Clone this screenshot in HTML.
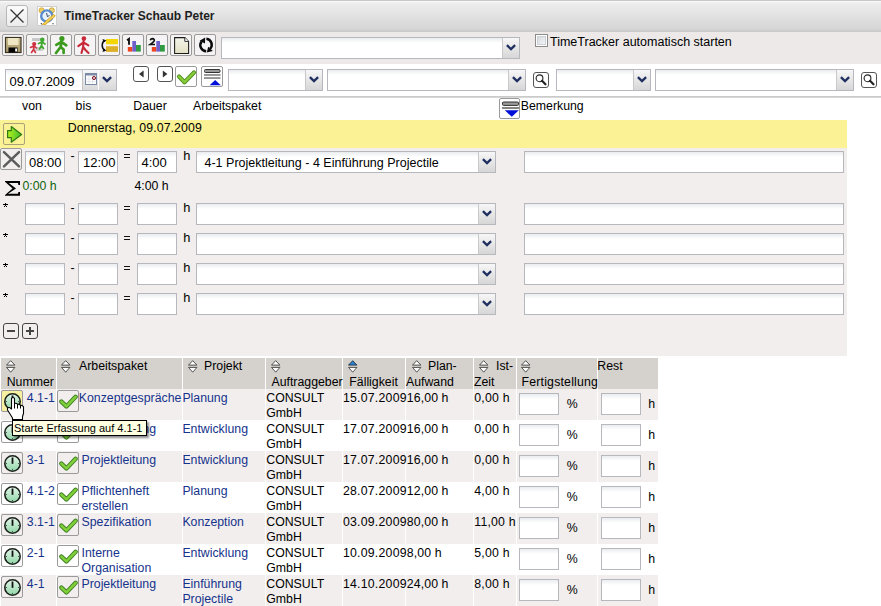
<!DOCTYPE html><html><head><meta charset="utf-8"><style>
*{margin:0;padding:0;box-sizing:content-box}
html,body{width:881px;height:606px;overflow:hidden;background:#fff;font-family:"Liberation Sans", sans-serif;font-size:12.3px;color:#000}
.t{position:absolute;white-space:nowrap;line-height:15px}
.inp{position:absolute;border:1px solid #b6b8be;background:linear-gradient(#e9ecef,#fff 5px,#fff)}
.cb .dd{position:absolute;right:0;top:0;width:16px;border-left:1px solid #c9c9c9;background:linear-gradient(#f7f7f7,#d6d6d6)}
.btn{position:absolute;border:1px solid #9a9a9a;border-radius:2px;background:transparent}
.ybtn{background:transparent;border-color:#a9a17a}
.rbtn.obtn{border-radius:3px;border-color:#444;background:transparent}
.rbtn{position:absolute;border:1px solid #555;border-radius:3px;background:#fff}
svg{display:block}
</style></head><body><div style="position:absolute;left:0px;top:0px;width:881px;height:32px;background:linear-gradient(#c8c8c8 0,#c8c8c8 1px,#fbfbfb 1px,#ededed 3px,#d6d6d6 29px,#cbcbcb 31px,#c8c8c8 32px)"></div>
<div style="position:absolute;left:6px;top:5px;width:20px;height:20px;border:1px solid #b8b8b8;border-radius:3px;background:linear-gradient(#fbfbfb,#ececec)"><svg width="20" height="20"><path d="M3.5 3.5 L16.5 16.5 M16.5 3.5 L3.5 16.5" stroke="#333" stroke-width="1.3"/></svg></div>
<div style="position:absolute;left:37px;top:6px;width:18px;height:18px;border:1px solid #cfcfcf;background:#fff"><svg width="18" height="18" viewBox="0 0 18 18">
<circle cx="3.6" cy="3.4" r="2.6" fill="#f2d060" stroke="#d0a030" stroke-width="0.8"/>
<circle cx="13.8" cy="3.4" r="2.6" fill="#e8d070" stroke="#c8a030" stroke-width="0.8"/>
<circle cx="8.8" cy="9" r="5.6" fill="#e8f2ff" stroke="#5a8ccc" stroke-width="2.4"/>
<path d="M8.6 6 L9.4 9.6 L11.5 8.5" fill="none" stroke="#2a3a50" stroke-width="0.9"/>
<path d="M4 16.5 L2.8 17 M14.5 16.5 L15.5 17" stroke="#333" stroke-width="1.2"/>
<path d="M5.2 16.6 L15.6 7.2 L17.4 9 L7 18 L4.4 18 Z" fill="#f3cf55" stroke="#c89a28" stroke-width="0.8"/>
</svg></div>
<div class="t" style="left:64px;top:9px;font-weight:bold;font-size:12px;color:#1e1e1e">TimeTracker Schaub Peter</div>
<div style="position:absolute;left:0px;top:32px;width:881px;height:32px;background:#ece9e8"></div>
<div class="btn" style="left:2px;top:34px;width:20px;height:20px;background:#f5f3f3"><svg width="22" height="22" viewBox="0 0 22 22" style="position:absolute;left:-1px;top:-1px"><defs><linearGradient id="fl" x1="0" y1="0" x2="0" y2="1"><stop offset="0" stop-color="#cdbf92"/><stop offset="1" stop-color="#a8986a"/></linearGradient></defs><rect x="3.5" y="3.5" width="15.5" height="15" fill="url(#fl)" stroke="#3b3323" stroke-width="1.2"/><rect x="6" y="4" width="10.5" height="7" fill="#efe6c4"/><rect x="6.5" y="13.5" width="9" height="5" fill="#050505"/><rect x="13.2" y="14.5" width="1.8" height="3" fill="#fff"/></svg></div>
<div class="btn" style="left:26px;top:34px;width:20px;height:20px;background:#f5f3f3"><svg width="22" height="22" viewBox="0 0 22 22" style="position:absolute;left:-1px;top:-1px"><rect x="6" y="4" width="10" height="3" fill="#c8c8c8"/><rect x="8" y="13" width="9" height="4" fill="#d0d0d0"/><g stroke="#d03040" stroke-width="1.6" fill="none" stroke-linecap="round"><circle cx="8.2" cy="10" r="1.3" fill="#d03040"/><path d="M8 11.5 L7.5 15.5 M4.5 13.5 L8 12 L10.5 14 M7.5 15.5 L5.5 18.5 M7.5 15.5 L9.5 18.5"/></g><g stroke="#40a830" stroke-width="1.7" fill="none" stroke-linecap="round"><circle cx="16.3" cy="5.8" r="1.4" fill="#40a830"/><path d="M16 7.5 L15.5 11.5 M12.5 9.5 L16 8 L19 10 M15.5 11.5 L13.5 15 M15.5 11.5 L17.5 14.5"/></g></svg></div>
<div class="btn" style="left:50px;top:34px;width:20px;height:20px;background:#f5f3f3"><svg width="22" height="22" viewBox="0 0 22 22" style="position:absolute;left:-1px;top:-1px"><g stroke="#3c9a1e" stroke-width="2.7" fill="none" stroke-linecap="round" stroke-linejoin="round"><path d="M11.6 7 L10.6 13 M6.3 10.8 L11.4 7.8 L16.3 11.3 M10.6 13 L6 19 M10.6 13 L13.6 15.6 L13.6 19"/></g><circle cx="11.9" cy="4.6" r="2.6" fill="#3c9a1e"/></svg></div>
<div class="btn" style="left:74px;top:34px;width:20px;height:20px;background:#f5f3f3"><svg width="22" height="22" viewBox="0 0 22 22" style="position:absolute;left:-1px;top:-1px"><g stroke="#c82838" stroke-width="2.1" fill="none" stroke-linecap="round" stroke-linejoin="round"><path d="M9.6 6.8 L9.1 13 M4.3 12.2 L9.5 8.3 L14.4 11.3 M9.1 13 L7.5 19 M9.1 13 L11.5 16 L14.5 19"/></g><circle cx="9.9" cy="4.6" r="2.3" fill="#c82838"/></svg></div>
<div class="btn" style="left:98px;top:34px;width:20px;height:20px;background:#f5f3f3"><svg width="22" height="22" viewBox="0 0 22 22" style="position:absolute;left:-1px;top:-1px"><rect x="8" y="5" width="12" height="5.3" fill="#f4d700"/><rect x="8" y="12.2" width="12" height="5.7" fill="#dcb028"/><path d="M7 6.5 Q4.2 7.5 4.2 11.2 Q4.2 15 7 16.5" fill="none" stroke="#111" stroke-width="1.5"/><path d="M4.5 5 L8.5 6.5 L5.5 8.5 Z M4.5 18 L8.5 16.5 L5.5 14.5 Z" fill="#111"/></svg></div>
<div class="btn" style="left:122px;top:34px;width:20px;height:20px;background:#f5f3f3"><svg width="22" height="22" viewBox="0 0 22 22" style="position:absolute;left:-1px;top:-1px"><path d="M5 6.2 L7 4.8 V10.8" fill="none" stroke="#111" stroke-width="1.9"/><rect x="5.8" y="13" width="4.5" height="4.6" fill="#ee4422"/><rect x="10.3" y="7" width="3.7" height="10.6" fill="#6f5fcc"/><rect x="14" y="11" width="4.8" height="6.6" fill="#2f9a40"/></svg></div>
<div class="btn" style="left:146px;top:34px;width:20px;height:20px;background:#f5f3f3"><svg width="22" height="22" viewBox="0 0 22 22" style="position:absolute;left:-1px;top:-1px"><path d="M4.3 6.2 Q4.8 4.6 6.5 4.6 Q8.6 4.8 8.2 6.8 Q7.8 8 4.2 10.5 H9" fill="none" stroke="#111" stroke-width="1.7"/><rect x="5.8" y="13" width="4.5" height="4.6" fill="#ee4422"/><rect x="10.3" y="7" width="3.7" height="10.6" fill="#6f5fcc"/><rect x="14" y="11" width="4.8" height="6.6" fill="#2f9a40"/></svg></div>
<div class="btn" style="left:170px;top:34px;width:20px;height:20px;background:#f5f3f3"><svg width="22" height="22" viewBox="0 0 22 22" style="position:absolute;left:-1px;top:-1px"><defs><linearGradient id="dg" x1="0" y1="0" x2="0" y2="1"><stop offset="0" stop-color="#f4f4ea"/><stop offset="1" stop-color="#e2e0c4"/></linearGradient></defs><path d="M4.6 3.6 H14.8 L18.6 7.4 V19.4 H4.6 Z" fill="url(#dg)" stroke="#1a1a1a" stroke-width="1.05"/><path d="M14.8 3.6 V7.4 H18.6" fill="#fff" stroke="#1a1a1a" stroke-width="0.9"/></svg></div>
<div class="btn" style="left:194px;top:34px;width:20px;height:20px;background:#f5f3f3"><svg width="22" height="22" viewBox="0 0 22 22" style="position:absolute;left:-1px;top:-1px"><g fill="none" stroke="#0a0a0a" stroke-width="2.5"><path d="M7.6 7.4 A6.1 6.1 0 0 0 12.2 17.2"/><path d="M12.4 4.7 A6.1 6.1 0 0 1 16 15"/></g><path d="M5.6 6.8 L11.2 3.6 L11 9.4 Z" fill="#0a0a0a"/><path d="M18.8 17 L12.8 18.6 L14.2 12.8 Z" fill="#0a0a0a"/></svg></div>
<div class="inp cb" style="left:221px;top:37px;width:297px;height:20px"><div class="dd" style="height:20px"><svg width="10" height="7" viewBox="0 0 10 7" style="position:absolute;left:3px;top:6px"><path d="M0.9 1.2 L5 5.1 L9.1 1.2" fill="none" stroke="#1f2f60" stroke-width="2.3"/></svg></div></div>
<div style="position:absolute;left:535px;top:34px;width:11px;height:11px;border:1px solid #8c8c8c;background:#fff"><div style="position:absolute;left:1px;top:1px;width:7px;height:7px;border:1px solid #cdd0d4;background:linear-gradient(135deg,#d6dade,#f4f6f8)"></div></div>
<div class="t" style="left:550px;top:35px;font-size:12.5px">TimeTracker automatisch starten</div>
<div class="inp" style="left:5px;top:69px;width:110px;height:20px"><div style="position:absolute;left:76px;top:0;width:16px;height:20px;border-left:1px solid #c4c4c4;background:linear-gradient(#f4f6f8,#dadada)"><svg width="12" height="12" viewBox="0 0 12 12" style="position:absolute;left:2px;top:3px"><rect x="0.5" y="0.5" width="11" height="11" fill="#fff" stroke="#7b8ba3" stroke-width="1"/><rect x="0.5" y="0.5" width="11" height="2" fill="#7b8ba3"/><path d="M4 3 V11 M7.5 3 V11 M1 6 H11 M1 8.6 H11" stroke="#dde2ea" stroke-width="0.8"/><circle cx="9" cy="5" r="1.5" fill="none" stroke="#7a0010" stroke-width="1"/></svg></div><div class="dd" style="position:absolute;right:0;top:0;width:17px;height:20px;border-left:1px solid #fff;background:linear-gradient(#f3f3f3,#d8d8d8)"><svg width="10" height="7" viewBox="0 0 10 7" style="position:absolute;left:3px;top:6px"><path d="M0.9 1.2 L5 5.1 L9.1 1.2" fill="none" stroke="#1f2f60" stroke-width="2.3"/></svg></div></div>
<div class="t" style="left:9.5px;top:74px;font-size:13px">09.07.2009</div>
<div class="rbtn" style="left:133px;top:66px;width:14px;height:14px"><svg width="16" height="16" viewBox="0 0 16 16" style="position:absolute;left:-1px;top:-1px"><path d="M10.6 4.4 V11.4 L6 7.9 Z" fill="#333"/></svg></div>
<div class="rbtn" style="left:157px;top:66px;width:14px;height:14px"><svg width="16" height="16" viewBox="0 0 16 16" style="position:absolute;left:-1px;top:-1px"><path d="M5.8 4.4 V11.4 L10.4 7.9 Z" fill="#333"/></svg></div>
<div class="btn" style="left:175px;top:66px;width:20px;height:19px"><svg width="22" height="21" viewBox="0 0 22 21" style="position:absolute;left:-1px;top:-1px"><path d="M4 10.5 L9.5 16.2 L19 6.5" fill="none" stroke="#4f8f1f" stroke-width="4.2" stroke-linecap="round" stroke-linejoin="round"/><path d="M4 10.5 L9.5 16.2 L19 6.5" fill="none" stroke="#88cc3c" stroke-width="2.4" stroke-linecap="round" stroke-linejoin="round"/></svg></div>
<div class="btn" style="left:201px;top:66px;width:20px;height:19px"><svg width="22" height="21" viewBox="0 0 22 21" style="position:absolute;left:-1px;top:-1px"><rect x="3.5" y="3.5" width="15.5" height="3" rx="1" fill="#9a9a9a" stroke="#333" stroke-width="1"/><rect x="3" y="8.2" width="16.5" height="1.5" fill="#777"/><rect x="3" y="11.3" width="16.5" height="1.5" fill="#777"/><path d="M8.6 19.2 L14.2 14 L19.8 19.2 Z" fill="#0010d8"/></svg></div>
<div class="inp cb" style="left:228px;top:69px;width:93px;height:20px"><div class="dd" style="height:20px"><svg width="10" height="7" viewBox="0 0 10 7" style="position:absolute;left:3px;top:6px"><path d="M0.9 1.2 L5 5.1 L9.1 1.2" fill="none" stroke="#1f2f60" stroke-width="2.3"/></svg></div></div>
<div class="inp cb" style="left:327px;top:69px;width:197px;height:20px"><div class="dd" style="height:20px"><svg width="10" height="7" viewBox="0 0 10 7" style="position:absolute;left:3px;top:6px"><path d="M0.9 1.2 L5 5.1 L9.1 1.2" fill="none" stroke="#1f2f60" stroke-width="2.3"/></svg></div></div>
<div class="rbtn" style="left:533px;top:72px;width:14px;height:14px"><svg width="16" height="16" viewBox="0 0 16 16" style="position:absolute;left:-1px;top:-1px"><circle cx="6.5" cy="6.3" r="3.4" fill="#fff" stroke="#222" stroke-width="1.1"/><path d="M9 8.8 L12.5 12.3" stroke="#222" stroke-width="2.2" stroke-linecap="round"/></svg></div>
<div class="inp cb" style="left:556px;top:69px;width:93px;height:20px"><div class="dd" style="height:20px"><svg width="10" height="7" viewBox="0 0 10 7" style="position:absolute;left:3px;top:6px"><path d="M0.9 1.2 L5 5.1 L9.1 1.2" fill="none" stroke="#1f2f60" stroke-width="2.3"/></svg></div></div>
<div class="inp cb" style="left:655px;top:69px;width:197px;height:20px"><div class="dd" style="height:20px"><svg width="10" height="7" viewBox="0 0 10 7" style="position:absolute;left:3px;top:6px"><path d="M0.9 1.2 L5 5.1 L9.1 1.2" fill="none" stroke="#1f2f60" stroke-width="2.3"/></svg></div></div>
<div class="rbtn" style="left:861px;top:72px;width:14px;height:14px"><svg width="16" height="16" viewBox="0 0 16 16" style="position:absolute;left:-1px;top:-1px"><circle cx="6.5" cy="6.3" r="3.4" fill="#fff" stroke="#222" stroke-width="1.1"/><path d="M9 8.8 L12.5 12.3" stroke="#222" stroke-width="2.2" stroke-linecap="round"/></svg></div>
<div style="position:absolute;left:0px;top:96px;width:881px;height:2px;background:linear-gradient(#c4c4c4,#dedede)"></div>
<div class="t" style="left:22px;top:99px;">von</div>
<div class="t" style="left:75.6px;top:99px;">bis</div>
<div class="t" style="left:133.3px;top:99px;">Dauer</div>
<div class="t" style="left:193px;top:99px;">Arbeitspaket</div>
<div class="btn" style="left:499px;top:98px;width:19px;height:19px"><svg width="21" height="21" viewBox="0 0 21 21" style="position:absolute;left:-1px;top:-1px"><rect x="3.5" y="4" width="16" height="3.4" rx="1" fill="#999" stroke="#333" stroke-width="1"/><rect x="3" y="9.2" width="17" height="1.6" fill="#666"/><path d="M5.8 12.3 H19.8 L12.8 18.8 Z" fill="#0010d8"/></svg></div>
<div class="t" style="left:520.8px;top:99px;">Bemerkung</div>
<div style="position:absolute;left:0px;top:120px;width:847px;height:28px;background:#faf295"></div>
<div class="btn ybtn" style="left:3px;top:123px;width:20px;height:20px"><svg width="22" height="22" viewBox="0 0 22 22" style="position:absolute;left:-1px;top:-1px"><defs><linearGradient id="ag" x1="0" y1="0" x2="1" y2="0"><stop offset="0" stop-color="#b4f01c"/><stop offset="1" stop-color="#3cbc30"/></linearGradient></defs><path d="M4.6 7.6 H8.3 V3.6 L18.6 11.4 L8.3 19.2 V14.7 H4.6 Z" fill="url(#ag)" stroke="#2d7a14" stroke-width="1.2" stroke-linejoin="round"/></svg></div>
<div class="t" style="left:67.7px;top:121px;letter-spacing:0.1px">Donnerstag, 09.07.2009</div>
<div style="position:absolute;left:0px;top:148px;width:847px;height:208px;background:#f2eeed"></div>
<div class="btn" style="left:0px;top:148px;width:20px;height:20px"><svg width="22" height="22" viewBox="0 0 22 22" style="position:absolute;left:-1px;top:-1px"><path d="M4 4.1 L19 18.4 M19 4.1 L4 18.4" stroke="#5c5c5c" stroke-width="2.5" stroke-linecap="round"/></svg></div>
<div class="inp" style="left:25px;top:151px;width:38px;height:20px"><span style="position:absolute;left:3px;top:3px;font-size:13px;line-height:15px">08:00</span></div>
<div class="t" style="left:70.5px;top:149px;">-</div>
<div class="inp" style="left:78px;top:151px;width:38px;height:20px"><span style="position:absolute;left:4px;top:3px;font-size:13px;line-height:15px">12:00</span></div>
<div style="position:absolute;left:124px;top:154px;width:6px;height:1.3px;background:#111"></div><div style="position:absolute;left:124px;top:157px;width:6px;height:1.3px;background:#111"></div>
<div class="inp" style="left:137px;top:151px;width:38px;height:20px"><span style="position:absolute;left:3.5px;top:3px;font-size:13px;line-height:15px">4:00</span></div>
<div class="t" style="left:183.3px;top:147.5px;font-size:12.8px">h</div>
<div class="inp cb" style="left:196px;top:151px;width:298px;height:20px"><span style="position:absolute;left:7.5px;top:3.5px;white-space:nowrap;font-size:12.5px;line-height:15px">4-1 Projektleitung - 4 Einführung Projectile</span><div class="dd" style="height:20px"><svg width="10" height="7" viewBox="0 0 10 7" style="position:absolute;left:3px;top:6px"><path d="M0.9 1.2 L5 5.1 L9.1 1.2" fill="none" stroke="#1f2f60" stroke-width="2.3"/></svg></div></div>
<div class="inp" style="left:524px;top:151px;width:318px;height:20px"></div>
<div class="t" style="left:22.5px;top:179px;color:#10640f">0:00 h</div>
<div class="t" style="left:134.5px;top:179px;">4:00 h</div>
<div style="position:absolute;left:5px;top:203px;width:1px;height:3px;background:#000"></div><div style="position:absolute;left:3px;top:204px;width:5px;height:1px;background:#000"></div><div style="position:absolute;left:4px;top:206px;width:1px;height:1px;background:#000"></div><div style="position:absolute;left:6px;top:206px;width:1px;height:1px;background:#000"></div>
<div class="inp" style="left:25px;top:203px;width:38px;height:20px"></div>
<div class="t" style="left:70.5px;top:201px;">-</div>
<div class="inp" style="left:78px;top:203px;width:38px;height:20px"></div>
<div style="position:absolute;left:124px;top:206px;width:6px;height:1.3px;background:#111"></div><div style="position:absolute;left:124px;top:209px;width:6px;height:1.3px;background:#111"></div>
<div class="inp" style="left:137px;top:203px;width:38px;height:20px"></div>
<div class="t" style="left:183.3px;top:199.5px;font-size:12.8px">h</div>
<div class="inp cb" style="left:196px;top:203px;width:298px;height:20px"><div class="dd" style="height:20px"><svg width="10" height="7" viewBox="0 0 10 7" style="position:absolute;left:3px;top:6px"><path d="M0.9 1.2 L5 5.1 L9.1 1.2" fill="none" stroke="#1f2f60" stroke-width="2.3"/></svg></div></div>
<div class="inp" style="left:524px;top:203px;width:318px;height:20px"></div>
<div style="position:absolute;left:5px;top:233px;width:1px;height:3px;background:#000"></div><div style="position:absolute;left:3px;top:234px;width:5px;height:1px;background:#000"></div><div style="position:absolute;left:4px;top:236px;width:1px;height:1px;background:#000"></div><div style="position:absolute;left:6px;top:236px;width:1px;height:1px;background:#000"></div>
<div class="inp" style="left:25px;top:233px;width:38px;height:20px"></div>
<div class="t" style="left:70.5px;top:231px;">-</div>
<div class="inp" style="left:78px;top:233px;width:38px;height:20px"></div>
<div style="position:absolute;left:124px;top:236px;width:6px;height:1.3px;background:#111"></div><div style="position:absolute;left:124px;top:239px;width:6px;height:1.3px;background:#111"></div>
<div class="inp" style="left:137px;top:233px;width:38px;height:20px"></div>
<div class="t" style="left:183.3px;top:229.5px;font-size:12.8px">h</div>
<div class="inp cb" style="left:196px;top:233px;width:298px;height:20px"><div class="dd" style="height:20px"><svg width="10" height="7" viewBox="0 0 10 7" style="position:absolute;left:3px;top:6px"><path d="M0.9 1.2 L5 5.1 L9.1 1.2" fill="none" stroke="#1f2f60" stroke-width="2.3"/></svg></div></div>
<div class="inp" style="left:524px;top:233px;width:318px;height:20px"></div>
<div style="position:absolute;left:5px;top:263px;width:1px;height:3px;background:#000"></div><div style="position:absolute;left:3px;top:264px;width:5px;height:1px;background:#000"></div><div style="position:absolute;left:4px;top:266px;width:1px;height:1px;background:#000"></div><div style="position:absolute;left:6px;top:266px;width:1px;height:1px;background:#000"></div>
<div class="inp" style="left:25px;top:263px;width:38px;height:20px"></div>
<div class="t" style="left:70.5px;top:261px;">-</div>
<div class="inp" style="left:78px;top:263px;width:38px;height:20px"></div>
<div style="position:absolute;left:124px;top:266px;width:6px;height:1.3px;background:#111"></div><div style="position:absolute;left:124px;top:269px;width:6px;height:1.3px;background:#111"></div>
<div class="inp" style="left:137px;top:263px;width:38px;height:20px"></div>
<div class="t" style="left:183.3px;top:259.5px;font-size:12.8px">h</div>
<div class="inp cb" style="left:196px;top:263px;width:298px;height:20px"><div class="dd" style="height:20px"><svg width="10" height="7" viewBox="0 0 10 7" style="position:absolute;left:3px;top:6px"><path d="M0.9 1.2 L5 5.1 L9.1 1.2" fill="none" stroke="#1f2f60" stroke-width="2.3"/></svg></div></div>
<div class="inp" style="left:524px;top:263px;width:318px;height:20px"></div>
<div style="position:absolute;left:5px;top:293px;width:1px;height:3px;background:#000"></div><div style="position:absolute;left:3px;top:294px;width:5px;height:1px;background:#000"></div><div style="position:absolute;left:4px;top:296px;width:1px;height:1px;background:#000"></div><div style="position:absolute;left:6px;top:296px;width:1px;height:1px;background:#000"></div>
<div class="inp" style="left:25px;top:293px;width:38px;height:20px"></div>
<div class="t" style="left:70.5px;top:291px;">-</div>
<div class="inp" style="left:78px;top:293px;width:38px;height:20px"></div>
<div style="position:absolute;left:124px;top:296px;width:6px;height:1.3px;background:#111"></div><div style="position:absolute;left:124px;top:299px;width:6px;height:1.3px;background:#111"></div>
<div class="inp" style="left:137px;top:293px;width:38px;height:20px"></div>
<div class="t" style="left:183.3px;top:289.5px;font-size:12.8px">h</div>
<div class="inp cb" style="left:196px;top:293px;width:298px;height:20px"><div class="dd" style="height:20px"><svg width="10" height="7" viewBox="0 0 10 7" style="position:absolute;left:3px;top:6px"><path d="M0.9 1.2 L5 5.1 L9.1 1.2" fill="none" stroke="#1f2f60" stroke-width="2.3"/></svg></div></div>
<div class="inp" style="left:524px;top:293px;width:318px;height:20px"></div>
<div class="rbtn obtn" style="left:3px;top:323px;width:14px;height:14px"><svg width="16" height="16" viewBox="0 0 16 16" style="position:absolute;left:-1px;top:-1px"><path d="M4 8 H12" stroke="#444" stroke-width="2"/></svg></div>
<div class="rbtn obtn" style="left:22px;top:323px;width:14px;height:14px"><svg width="16" height="16" viewBox="0 0 16 16" style="position:absolute;left:-1px;top:-1px"><path d="M4 8 H12 M8 4 V12" stroke="#444" stroke-width="2"/></svg></div>
<svg width="22" height="22" viewBox="0 176 22 22" style="position:absolute;left:0;top:176px"><path d="M5 181 H20 V185 H18.4 L18 183.1 H8.8 L16 188.5 L8 193.8 H18 L18.4 191.9 H20 V195.8 H5 V195 L12.5 188.5 L5 181.8 Z" fill="#000"/></svg>
<div style="position:absolute;left:1px;top:358px;width:657px;height:31px;background:#d5d1cc"></div>
<div style="position:absolute;left:56px;top:358px;width:1px;height:31px;background:#ffffff"></div>
<div style="position:absolute;left:182px;top:358px;width:1px;height:31px;background:#ffffff"></div>
<div style="position:absolute;left:265px;top:358px;width:1px;height:31px;background:#ffffff"></div>
<div style="position:absolute;left:342px;top:358px;width:1px;height:31px;background:#ffffff"></div>
<div style="position:absolute;left:405px;top:358px;width:1px;height:31px;background:#ffffff"></div>
<div style="position:absolute;left:473px;top:358px;width:1px;height:31px;background:#ffffff"></div>
<div style="position:absolute;left:516px;top:358px;width:1px;height:31px;background:#ffffff"></div>
<div style="position:absolute;left:597px;top:358px;width:1px;height:31px;background:#ffffff"></div>
<div style="position:absolute;left:1px;top:389px;width:657px;height:31px;background:#f2eeed"></div>
<div style="position:absolute;left:56px;top:389px;width:1px;height:31px;background:#ffffff"></div>
<div style="position:absolute;left:182px;top:389px;width:1px;height:31px;background:#ffffff"></div>
<div style="position:absolute;left:265px;top:389px;width:1px;height:31px;background:#ffffff"></div>
<div style="position:absolute;left:342px;top:389px;width:1px;height:31px;background:#ffffff"></div>
<div style="position:absolute;left:405px;top:389px;width:1px;height:31px;background:#ffffff"></div>
<div style="position:absolute;left:473px;top:389px;width:1px;height:31px;background:#ffffff"></div>
<div style="position:absolute;left:516px;top:389px;width:1px;height:31px;background:#ffffff"></div>
<div style="position:absolute;left:597px;top:389px;width:1px;height:31px;background:#ffffff"></div>
<div class="btn" style="left:1px;top:390px;width:20px;height:20px;background:#f7f0a0;"><svg width="20" height="20" viewBox="0 0 20 20"><defs><linearGradient id="cg" x1="0" y1="0" x2="0" y2="1"><stop offset="0" stop-color="#e4f6ea"/><stop offset="1" stop-color="#8fd6a6"/></linearGradient></defs><circle cx="10.5" cy="10.5" r="7.7" fill="url(#cg)" stroke="#1c221c" stroke-width="1.6"/><path d="M10.5 4.5 V10.8" stroke="#111" stroke-width="1.8"/><path d="M10.5 16.2 V17 M4 10.5 H4.8 M16.2 10.5 H17" stroke="#333" stroke-width="1"/></svg></div>
<div class="t" style="left:26.8px;top:391px;color:#15338c">4.1-1</div>
<div class="btn" style="left:57px;top:390px;width:20px;height:20px"><svg width="20" height="20" viewBox="0 0 20 20"><path d="M3.4 10.6 L8.4 15.4 L17.6 5.8" fill="none" stroke="#3f7f22" stroke-width="4.4" stroke-linecap="round" stroke-linejoin="round"/><path d="M3.4 10.6 L8.4 15.4 L17.6 5.8" fill="none" stroke="#7fd03a" stroke-width="2.6" stroke-linecap="round" stroke-linejoin="round"/></svg></div>
<div class="t" style="left:78.8px;top:391px;color:#15338c">Konzeptgespräche</div>
<div class="t" style="left:182.4px;top:391px;color:#15338c">Planung</div>
<div class="t" style="left:266.3px;top:391px;">CONSULT</div>
<div class="t" style="left:266.3px;top:406px;">GmbH</div>
<div class="t" style="left:343px;top:391px;letter-spacing:0.22px">15.07.2009</div>
<div class="t" style="left:406.8px;top:391px;letter-spacing:0.1px">16,00 h</div>
<div class="t" style="left:474.3px;top:391px;letter-spacing:0.2px">0,00 h</div>
<div class="inp" style="left:519px;top:393px;width:38px;height:20px"></div>
<div class="t" style="left:566.7px;top:397px;">%</div>
<div class="inp" style="left:601px;top:393px;width:38px;height:20px"></div>
<div class="t" style="left:648.3px;top:397px;">h</div>
<div style="position:absolute;left:1px;top:420px;width:657px;height:31px;background:#ffffff"></div>
<div class="btn" style="left:1px;top:421px;width:20px;height:20px;"><svg width="20" height="20" viewBox="0 0 20 20"><defs><linearGradient id="cg" x1="0" y1="0" x2="0" y2="1"><stop offset="0" stop-color="#e4f6ea"/><stop offset="1" stop-color="#8fd6a6"/></linearGradient></defs><circle cx="10.5" cy="10.5" r="7.7" fill="url(#cg)" stroke="#1c221c" stroke-width="1.6"/><path d="M10.5 4.5 V10.8" stroke="#111" stroke-width="1.8"/><path d="M10.5 16.2 V17 M4 10.5 H4.8 M16.2 10.5 H17" stroke="#333" stroke-width="1"/></svg></div>
<div class="t" style="left:26.8px;top:422px;color:#15338c">4.1-3</div>
<div class="btn" style="left:57px;top:421px;width:20px;height:20px"><svg width="20" height="20" viewBox="0 0 20 20"><path d="M3.4 10.6 L8.4 15.4 L17.6 5.8" fill="none" stroke="#3f7f22" stroke-width="4.4" stroke-linecap="round" stroke-linejoin="round"/><path d="M3.4 10.6 L8.4 15.4 L17.6 5.8" fill="none" stroke="#7fd03a" stroke-width="2.6" stroke-linecap="round" stroke-linejoin="round"/></svg></div>
<div class="t" style="left:81.5px;top:422px;color:#15338c">Projektleitung</div>
<div class="t" style="left:182.4px;top:422px;color:#15338c">Entwicklung</div>
<div class="t" style="left:266.3px;top:422px;">CONSULT</div>
<div class="t" style="left:266.3px;top:437px;">GmbH</div>
<div class="t" style="left:343px;top:422px;letter-spacing:0.22px">17.07.2009</div>
<div class="t" style="left:406.8px;top:422px;letter-spacing:0.1px">16,00 h</div>
<div class="t" style="left:474.3px;top:422px;letter-spacing:0.2px">0,00 h</div>
<div class="inp" style="left:519px;top:424px;width:38px;height:20px"></div>
<div class="t" style="left:566.7px;top:428px;">%</div>
<div class="inp" style="left:601px;top:424px;width:38px;height:20px"></div>
<div class="t" style="left:648.3px;top:428px;">h</div>
<div style="position:absolute;left:1px;top:451px;width:657px;height:31px;background:#f2eeed"></div>
<div style="position:absolute;left:56px;top:451px;width:1px;height:31px;background:#ffffff"></div>
<div style="position:absolute;left:182px;top:451px;width:1px;height:31px;background:#ffffff"></div>
<div style="position:absolute;left:265px;top:451px;width:1px;height:31px;background:#ffffff"></div>
<div style="position:absolute;left:342px;top:451px;width:1px;height:31px;background:#ffffff"></div>
<div style="position:absolute;left:405px;top:451px;width:1px;height:31px;background:#ffffff"></div>
<div style="position:absolute;left:473px;top:451px;width:1px;height:31px;background:#ffffff"></div>
<div style="position:absolute;left:516px;top:451px;width:1px;height:31px;background:#ffffff"></div>
<div style="position:absolute;left:597px;top:451px;width:1px;height:31px;background:#ffffff"></div>
<div class="btn" style="left:1px;top:452px;width:20px;height:20px;"><svg width="20" height="20" viewBox="0 0 20 20"><defs><linearGradient id="cg" x1="0" y1="0" x2="0" y2="1"><stop offset="0" stop-color="#e4f6ea"/><stop offset="1" stop-color="#8fd6a6"/></linearGradient></defs><circle cx="10.5" cy="10.5" r="7.7" fill="url(#cg)" stroke="#1c221c" stroke-width="1.6"/><path d="M10.5 4.5 V10.8" stroke="#111" stroke-width="1.8"/><path d="M10.5 16.2 V17 M4 10.5 H4.8 M16.2 10.5 H17" stroke="#333" stroke-width="1"/></svg></div>
<div class="t" style="left:26.8px;top:453px;color:#15338c">3-1</div>
<div class="btn" style="left:57px;top:452px;width:20px;height:20px"><svg width="20" height="20" viewBox="0 0 20 20"><path d="M3.4 10.6 L8.4 15.4 L17.6 5.8" fill="none" stroke="#3f7f22" stroke-width="4.4" stroke-linecap="round" stroke-linejoin="round"/><path d="M3.4 10.6 L8.4 15.4 L17.6 5.8" fill="none" stroke="#7fd03a" stroke-width="2.6" stroke-linecap="round" stroke-linejoin="round"/></svg></div>
<div class="t" style="left:81.5px;top:453px;color:#15338c">Projektleitung</div>
<div class="t" style="left:182.4px;top:453px;color:#15338c">Entwicklung</div>
<div class="t" style="left:266.3px;top:453px;">CONSULT</div>
<div class="t" style="left:266.3px;top:468px;">GmbH</div>
<div class="t" style="left:343px;top:453px;letter-spacing:0.22px">17.07.2009</div>
<div class="t" style="left:406.8px;top:453px;letter-spacing:0.1px">16,00 h</div>
<div class="t" style="left:474.3px;top:453px;letter-spacing:0.2px">0,00 h</div>
<div class="inp" style="left:519px;top:455px;width:38px;height:20px"></div>
<div class="t" style="left:566.7px;top:459px;">%</div>
<div class="inp" style="left:601px;top:455px;width:38px;height:20px"></div>
<div class="t" style="left:648.3px;top:459px;">h</div>
<div style="position:absolute;left:1px;top:482px;width:657px;height:31px;background:#ffffff"></div>
<div class="btn" style="left:1px;top:483px;width:20px;height:20px;"><svg width="20" height="20" viewBox="0 0 20 20"><defs><linearGradient id="cg" x1="0" y1="0" x2="0" y2="1"><stop offset="0" stop-color="#e4f6ea"/><stop offset="1" stop-color="#8fd6a6"/></linearGradient></defs><circle cx="10.5" cy="10.5" r="7.7" fill="url(#cg)" stroke="#1c221c" stroke-width="1.6"/><path d="M10.5 4.5 V10.8" stroke="#111" stroke-width="1.8"/><path d="M10.5 16.2 V17 M4 10.5 H4.8 M16.2 10.5 H17" stroke="#333" stroke-width="1"/></svg></div>
<div class="t" style="left:26.8px;top:484px;color:#15338c">4.1-2</div>
<div class="btn" style="left:57px;top:483px;width:20px;height:20px"><svg width="20" height="20" viewBox="0 0 20 20"><path d="M3.4 10.6 L8.4 15.4 L17.6 5.8" fill="none" stroke="#3f7f22" stroke-width="4.4" stroke-linecap="round" stroke-linejoin="round"/><path d="M3.4 10.6 L8.4 15.4 L17.6 5.8" fill="none" stroke="#7fd03a" stroke-width="2.6" stroke-linecap="round" stroke-linejoin="round"/></svg></div>
<div class="t" style="left:81.5px;top:484px;color:#15338c">Pflichtenheft</div>
<div class="t" style="left:81.5px;top:499px;color:#15338c">erstellen</div>
<div class="t" style="left:182.4px;top:484px;color:#15338c">Planung</div>
<div class="t" style="left:266.3px;top:484px;">CONSULT</div>
<div class="t" style="left:266.3px;top:499px;">GmbH</div>
<div class="t" style="left:343px;top:484px;letter-spacing:0.22px">28.07.2009</div>
<div class="t" style="left:406.8px;top:484px;letter-spacing:0.1px">12,00 h</div>
<div class="t" style="left:474.3px;top:484px;letter-spacing:0.2px">4,00 h</div>
<div class="inp" style="left:519px;top:486px;width:38px;height:20px"></div>
<div class="t" style="left:566.7px;top:490px;">%</div>
<div class="inp" style="left:601px;top:486px;width:38px;height:20px"></div>
<div class="t" style="left:648.3px;top:490px;">h</div>
<div style="position:absolute;left:1px;top:513px;width:657px;height:31px;background:#f2eeed"></div>
<div style="position:absolute;left:56px;top:513px;width:1px;height:31px;background:#ffffff"></div>
<div style="position:absolute;left:182px;top:513px;width:1px;height:31px;background:#ffffff"></div>
<div style="position:absolute;left:265px;top:513px;width:1px;height:31px;background:#ffffff"></div>
<div style="position:absolute;left:342px;top:513px;width:1px;height:31px;background:#ffffff"></div>
<div style="position:absolute;left:405px;top:513px;width:1px;height:31px;background:#ffffff"></div>
<div style="position:absolute;left:473px;top:513px;width:1px;height:31px;background:#ffffff"></div>
<div style="position:absolute;left:516px;top:513px;width:1px;height:31px;background:#ffffff"></div>
<div style="position:absolute;left:597px;top:513px;width:1px;height:31px;background:#ffffff"></div>
<div class="btn" style="left:1px;top:514px;width:20px;height:20px;"><svg width="20" height="20" viewBox="0 0 20 20"><defs><linearGradient id="cg" x1="0" y1="0" x2="0" y2="1"><stop offset="0" stop-color="#e4f6ea"/><stop offset="1" stop-color="#8fd6a6"/></linearGradient></defs><circle cx="10.5" cy="10.5" r="7.7" fill="url(#cg)" stroke="#1c221c" stroke-width="1.6"/><path d="M10.5 4.5 V10.8" stroke="#111" stroke-width="1.8"/><path d="M10.5 16.2 V17 M4 10.5 H4.8 M16.2 10.5 H17" stroke="#333" stroke-width="1"/></svg></div>
<div class="t" style="left:26.8px;top:515px;color:#15338c">3.1-1</div>
<div class="btn" style="left:57px;top:514px;width:20px;height:20px"><svg width="20" height="20" viewBox="0 0 20 20"><path d="M3.4 10.6 L8.4 15.4 L17.6 5.8" fill="none" stroke="#3f7f22" stroke-width="4.4" stroke-linecap="round" stroke-linejoin="round"/><path d="M3.4 10.6 L8.4 15.4 L17.6 5.8" fill="none" stroke="#7fd03a" stroke-width="2.6" stroke-linecap="round" stroke-linejoin="round"/></svg></div>
<div class="t" style="left:81.5px;top:515px;color:#15338c">Spezifikation</div>
<div class="t" style="left:182.4px;top:515px;color:#15338c">Konzeption</div>
<div class="t" style="left:266.3px;top:515px;">CONSULT</div>
<div class="t" style="left:266.3px;top:530px;">GmbH</div>
<div class="t" style="left:343px;top:515px;letter-spacing:0.22px">03.09.2009</div>
<div class="t" style="left:406.8px;top:515px;letter-spacing:0.1px">80,00 h</div>
<div class="t" style="left:474.3px;top:515px;letter-spacing:0.2px">11,00 h</div>
<div class="inp" style="left:519px;top:517px;width:38px;height:20px"></div>
<div class="t" style="left:566.7px;top:521px;">%</div>
<div class="inp" style="left:601px;top:517px;width:38px;height:20px"></div>
<div class="t" style="left:648.3px;top:521px;">h</div>
<div style="position:absolute;left:1px;top:544px;width:657px;height:31px;background:#ffffff"></div>
<div class="btn" style="left:1px;top:545px;width:20px;height:20px;"><svg width="20" height="20" viewBox="0 0 20 20"><defs><linearGradient id="cg" x1="0" y1="0" x2="0" y2="1"><stop offset="0" stop-color="#e4f6ea"/><stop offset="1" stop-color="#8fd6a6"/></linearGradient></defs><circle cx="10.5" cy="10.5" r="7.7" fill="url(#cg)" stroke="#1c221c" stroke-width="1.6"/><path d="M10.5 4.5 V10.8" stroke="#111" stroke-width="1.8"/><path d="M10.5 16.2 V17 M4 10.5 H4.8 M16.2 10.5 H17" stroke="#333" stroke-width="1"/></svg></div>
<div class="t" style="left:26.8px;top:546px;color:#15338c">2-1</div>
<div class="btn" style="left:57px;top:545px;width:20px;height:20px"><svg width="20" height="20" viewBox="0 0 20 20"><path d="M3.4 10.6 L8.4 15.4 L17.6 5.8" fill="none" stroke="#3f7f22" stroke-width="4.4" stroke-linecap="round" stroke-linejoin="round"/><path d="M3.4 10.6 L8.4 15.4 L17.6 5.8" fill="none" stroke="#7fd03a" stroke-width="2.6" stroke-linecap="round" stroke-linejoin="round"/></svg></div>
<div class="t" style="left:81.5px;top:546px;color:#15338c">Interne</div>
<div class="t" style="left:81.5px;top:561px;color:#15338c">Organisation</div>
<div class="t" style="left:182.4px;top:546px;color:#15338c">Entwicklung</div>
<div class="t" style="left:266.3px;top:546px;">CONSULT</div>
<div class="t" style="left:266.3px;top:561px;">GmbH</div>
<div class="t" style="left:343px;top:546px;letter-spacing:0.22px">10.09.2009</div>
<div class="t" style="left:406.8px;top:546px;letter-spacing:0.1px">8,00 h</div>
<div class="t" style="left:474.3px;top:546px;letter-spacing:0.2px">5,00 h</div>
<div class="inp" style="left:519px;top:548px;width:38px;height:20px"></div>
<div class="t" style="left:566.7px;top:552px;">%</div>
<div class="inp" style="left:601px;top:548px;width:38px;height:20px"></div>
<div class="t" style="left:648.3px;top:552px;">h</div>
<div style="position:absolute;left:1px;top:575px;width:657px;height:31px;background:#f2eeed"></div>
<div style="position:absolute;left:56px;top:575px;width:1px;height:31px;background:#ffffff"></div>
<div style="position:absolute;left:182px;top:575px;width:1px;height:31px;background:#ffffff"></div>
<div style="position:absolute;left:265px;top:575px;width:1px;height:31px;background:#ffffff"></div>
<div style="position:absolute;left:342px;top:575px;width:1px;height:31px;background:#ffffff"></div>
<div style="position:absolute;left:405px;top:575px;width:1px;height:31px;background:#ffffff"></div>
<div style="position:absolute;left:473px;top:575px;width:1px;height:31px;background:#ffffff"></div>
<div style="position:absolute;left:516px;top:575px;width:1px;height:31px;background:#ffffff"></div>
<div style="position:absolute;left:597px;top:575px;width:1px;height:31px;background:#ffffff"></div>
<div class="btn" style="left:1px;top:576px;width:20px;height:20px;"><svg width="20" height="20" viewBox="0 0 20 20"><defs><linearGradient id="cg" x1="0" y1="0" x2="0" y2="1"><stop offset="0" stop-color="#e4f6ea"/><stop offset="1" stop-color="#8fd6a6"/></linearGradient></defs><circle cx="10.5" cy="10.5" r="7.7" fill="url(#cg)" stroke="#1c221c" stroke-width="1.6"/><path d="M10.5 4.5 V10.8" stroke="#111" stroke-width="1.8"/><path d="M10.5 16.2 V17 M4 10.5 H4.8 M16.2 10.5 H17" stroke="#333" stroke-width="1"/></svg></div>
<div class="t" style="left:26.8px;top:577px;color:#15338c">4-1</div>
<div class="btn" style="left:57px;top:576px;width:20px;height:20px"><svg width="20" height="20" viewBox="0 0 20 20"><path d="M3.4 10.6 L8.4 15.4 L17.6 5.8" fill="none" stroke="#3f7f22" stroke-width="4.4" stroke-linecap="round" stroke-linejoin="round"/><path d="M3.4 10.6 L8.4 15.4 L17.6 5.8" fill="none" stroke="#7fd03a" stroke-width="2.6" stroke-linecap="round" stroke-linejoin="round"/></svg></div>
<div class="t" style="left:81.5px;top:577px;color:#15338c">Projektleitung</div>
<div class="t" style="left:182.4px;top:577px;color:#15338c">Einführung</div>
<div class="t" style="left:182.4px;top:592px;color:#15338c">Projectile</div>
<div class="t" style="left:266.3px;top:577px;">CONSULT</div>
<div class="t" style="left:266.3px;top:592px;">GmbH</div>
<div class="t" style="left:343px;top:577px;letter-spacing:0.22px">14.10.2009</div>
<div class="t" style="left:406.8px;top:577px;letter-spacing:0.1px">24,00 h</div>
<div class="t" style="left:474.3px;top:577px;letter-spacing:0.2px">8,00 h</div>
<div class="inp" style="left:519px;top:579px;width:38px;height:20px"></div>
<div class="t" style="left:566.7px;top:583px;">%</div>
<div class="inp" style="left:601px;top:579px;width:38px;height:20px"></div>
<div class="t" style="left:648.3px;top:583px;">h</div>
<div style="position:absolute;left:6px;top:360px;width:10px;height:13px"><svg width="10" height="13" viewBox="0 0 10 13" style="position:absolute"><path d="M4.7 0.7 L8.9 5.1 H0.5 Z" fill="#fff" stroke="#404040" stroke-width="0.9" stroke-linejoin="round"/><path d="M0.5 7.4 H8.9 L4.7 12.2 Z" fill="#fff" stroke="#404040" stroke-width="0.9" stroke-linejoin="round"/></svg></div>
<div class="t" style="left:6.7px;top:374.5px;">Nummer</div>
<div style="position:absolute;left:61px;top:360px;width:10px;height:13px"><svg width="10" height="13" viewBox="0 0 10 13" style="position:absolute"><path d="M4.7 0.7 L8.9 5.1 H0.5 Z" fill="#fff" stroke="#404040" stroke-width="0.9" stroke-linejoin="round"/><path d="M0.5 7.4 H8.9 L4.7 12.2 Z" fill="#fff" stroke="#404040" stroke-width="0.9" stroke-linejoin="round"/></svg></div>
<div class="t" style="left:79px;top:358.5px;">Arbeitspaket</div>
<div style="position:absolute;left:187.7px;top:360px;width:10px;height:13px"><svg width="10" height="13" viewBox="0 0 10 13" style="position:absolute"><path d="M4.7 0.7 L8.9 5.1 H0.5 Z" fill="#fff" stroke="#404040" stroke-width="0.9" stroke-linejoin="round"/><path d="M0.5 7.4 H8.9 L4.7 12.2 Z" fill="#fff" stroke="#404040" stroke-width="0.9" stroke-linejoin="round"/></svg></div>
<div class="t" style="left:204px;top:358.5px;">Projekt</div>
<div style="position:absolute;left:271px;top:360px;width:10px;height:13px"><svg width="10" height="13" viewBox="0 0 10 13" style="position:absolute"><path d="M4.7 0.7 L8.9 5.1 H0.5 Z" fill="#fff" stroke="#404040" stroke-width="0.9" stroke-linejoin="round"/><path d="M0.5 7.4 H8.9 L4.7 12.2 Z" fill="#fff" stroke="#404040" stroke-width="0.9" stroke-linejoin="round"/></svg></div>
<div class="t" style="left:271.5px;top:374.5px;">Auftraggeber</div>
<div style="position:absolute;left:348px;top:360px;width:10px;height:13px"><svg width="10" height="13" viewBox="0 0 10 13" style="position:absolute"><path d="M4.7 0.7 L8.9 5.1 H0.5 Z" fill="#2a84d4" stroke="#203040" stroke-width="0.9" stroke-linejoin="round"/><path d="M0.5 7.4 H8.9 L4.7 12.2 Z" fill="#fff" stroke="#404040" stroke-width="0.9" stroke-linejoin="round"/></svg></div>
<div class="t" style="left:349.3px;top:374.5px;">Fälligkeit</div>
<div style="position:absolute;left:412px;top:360px;width:10px;height:13px"><svg width="10" height="13" viewBox="0 0 10 13" style="position:absolute"><path d="M4.7 0.7 L8.9 5.1 H0.5 Z" fill="#fff" stroke="#404040" stroke-width="0.9" stroke-linejoin="round"/><path d="M0.5 7.4 H8.9 L4.7 12.2 Z" fill="#fff" stroke="#404040" stroke-width="0.9" stroke-linejoin="round"/></svg></div>
<div class="t" style="left:428px;top:358.5px;">Plan-</div>
<div class="t" style="left:406px;top:374.5px;">Aufwand</div>
<div style="position:absolute;left:479px;top:360px;width:10px;height:13px"><svg width="10" height="13" viewBox="0 0 10 13" style="position:absolute"><path d="M4.7 0.7 L8.9 5.1 H0.5 Z" fill="#fff" stroke="#404040" stroke-width="0.9" stroke-linejoin="round"/><path d="M0.5 7.4 H8.9 L4.7 12.2 Z" fill="#fff" stroke="#404040" stroke-width="0.9" stroke-linejoin="round"/></svg></div>
<div class="t" style="left:496px;top:358.5px;">Ist-</div>
<div class="t" style="left:474px;top:374.5px;">Zeit</div>
<div style="position:absolute;left:520.5px;top:360px;width:10px;height:13px"><svg width="10" height="13" viewBox="0 0 10 13" style="position:absolute"><path d="M4.7 0.7 L8.9 5.1 H0.5 Z" fill="#fff" stroke="#404040" stroke-width="0.9" stroke-linejoin="round"/><path d="M0.5 7.4 H8.9 L4.7 12.2 Z" fill="#fff" stroke="#404040" stroke-width="0.9" stroke-linejoin="round"/></svg></div>
<div class="t" style="left:521.5px;top:374.5px;letter-spacing:0.2px">Fertigstellung</div>
<div class="t" style="left:597.3px;top:358.5px;">Rest</div>
<svg width="30" height="32" viewBox="0 390 30 32" style="position:absolute;left:0;top:390px"><path d="M11.5 398.5 Q11.5 397.5 13 397.5 Q14.5 397.5 14.5 398.5 V403.5 Q16 402.8 17.5 404.2 Q19 403.8 20.5 405.4 Q22.5 405 23.5 406.8 V413.5 L22.5 416.5 V419.5 H12.5 V418 L7.5 410 V408 Q9 406.5 11.5 409 Z" fill="#fff" stroke="#000" stroke-width="1.1" stroke-linejoin="round"/><path d="M14.5 403.5 V408.5 M17.5 404.2 V408.5 M20.5 405.4 V408.5" stroke="#000" stroke-width="1"/></svg>
<div style="position:absolute;left:12px;top:420px;width:133px;height:14px;border:1px solid #000;background:#ffffe1;box-shadow:2px 2px 2px rgba(0,0,0,0.45)"><span style="position:absolute;left:1px;top:0px;font-size:11px;line-height:14px;white-space:nowrap">Starte Erfassung auf 4.1-1</span></div></body></html>
